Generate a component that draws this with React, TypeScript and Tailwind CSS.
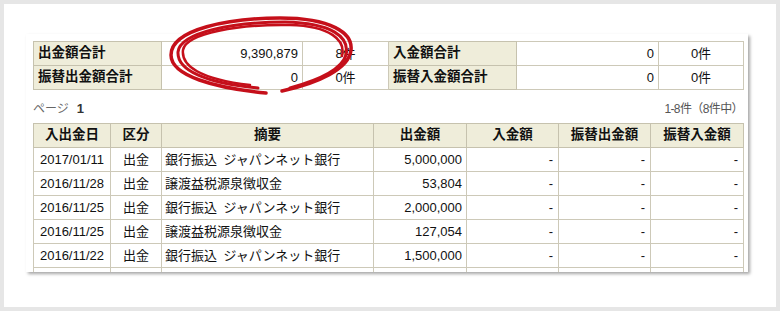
import React from "react";

const rows: [string, string, string, string][] = [
  ["2017/01/11", "出金", "銀行振込\u2002ジャパンネット銀行", "5,000,000"],
  ["2016/11/28", "出金", "譲渡益税源泉徴収金", "53,804"],
  ["2016/11/25", "出金", "銀行振込\u2002ジャパンネット銀行", "2,000,000"],
  ["2016/11/25", "出金", "譲渡益税源泉徴収金", "127,054"],
  ["2016/11/22", "出金", "銀行振込\u2002ジャパンネット銀行", "1,500,000"],
  ["2016/11/22", "出金", "譲渡益税源泉徴収金", "98,315"],
];

const th = "border border-[#c6c2ae] bg-[#efedda] font-bold text-[13.5px] text-[#111] h-[24px] p-0";
const td = "border border-[#cdc9b8] text-[13px] text-[#111] h-[24px] p-0";

export default function App() {
  return (
    <div className="relative w-[780px] h-[311px] border-4 border-[#e6e6e6] bg-white font-['Liberation_Sans','Noto_Sans_CJK_JP',sans-serif] overflow-hidden">
      <div className="ml-[22px] mt-[30px] w-[722px] h-[238px] bg-white shadow-[2px_2px_3px_rgba(0,0,0,0.35)] overflow-hidden">
        <div className="pl-[7px] pt-[7px]">
          <table className="border-collapse table-fixed w-[710px] border border-[#bdb8a3]">
            <colgroup>
              <col className="w-[128px]" />
              <col className="w-[141px]" />
              <col className="w-[86px]" />
              <col className="w-[128px]" />
              <col className="w-[142px]" />
              <col className="w-[85px]" />
            </colgroup>
            <tbody>
              <tr>
                <td className={`${th} text-left pl-[4px]`}>出金額合計</td>
                <td className={`${td} text-right pr-[4px]`}>9,390,879</td>
                <td className={`${td} text-center`}>8件</td>
                <td className={`${th} text-left pl-[4px]`}>入金額合計</td>
                <td className={`${td} text-right pr-[4px]`}>0</td>
                <td className={`${td} text-center`}>0件</td>
              </tr>
              <tr>
                <td className={`${th} text-left pl-[4px]`}>振替出金額合計</td>
                <td className={`${td} text-right pr-[4px]`}>0</td>
                <td className={`${td} text-center`}>0件</td>
                <td className={`${th} text-left pl-[4px]`}>振替入金額合計</td>
                <td className={`${td} text-right pr-[4px]`}>0</td>
                <td className={`${td} text-center`}>0件</td>
              </tr>
            </tbody>
          </table>

          <div className="w-[710px] flex justify-between items-center pt-[11px] pb-[6px] leading-[16px]">
            <div className="flex items-center">
              <span className="text-[12px] text-[#666]">ページ</span>
              <span className="ml-[8px] text-[13px] font-bold text-[#333]">1</span>
            </div>
            <span className="text-[12px] text-[#555] tracking-[-0.6px]">1-8件（8件中）</span>
          </div>

          <table className="border-collapse table-fixed w-[710px] border border-[#bdb8a3]">
            <colgroup>
              <col className="w-[77px]" />
              <col className="w-[51px]" />
              <col className="w-[212px]" />
              <col className="w-[93px]" />
              <col className="w-[92px]" />
              <col className="w-[92px]" />
              <col className="w-[93px]" />
            </colgroup>
            <thead>
              <tr>
                <th className={`${th} text-center`}>入出金日</th>
                <th className={`${th} text-center`}>区分</th>
                <th className={`${th} text-center`}>摘要</th>
                <th className={`${th} text-center`}>出金額</th>
                <th className={`${th} text-center`}>入金額</th>
                <th className={`${th} text-center`}>振替出金額</th>
                <th className={`${th} text-center`}>振替入金額</th>
              </tr>
            </thead>
            <tbody>
              {rows.map((r, i) => (
                <tr key={i}>
                  <td className={`${td} text-center`}>{r[0]}</td>
                  <td className={`${td} text-center`}>{r[1]}</td>
                  <td className={`${td} text-left pl-[3px]`}>{r[2]}</td>
                  <td className={`${td} text-right pr-[4px]`}>{r[3]}</td>
                  <td className={`${td} text-right pr-[5px]`}>-</td>
                  <td className={`${td} text-right pr-[5px]`}>-</td>
                  <td className={`${td} text-right pr-[5px]`}>-</td>
                </tr>
              ))}
            </tbody>
          </table>
        </div>
      </div>

      <svg
        className="absolute left-[-4px] top-[-4px] pointer-events-none"
        width="780"
        height="311"
        viewBox="0 0 780 311"
      >
        <g fill="none" stroke="#c50f1a" strokeLinecap="round" strokeLinejoin="round">
          <path strokeWidth="3.5" d="M 266 93 C 215 88, 171 76, 171 55 C 171 29, 230 18, 280 18 C 331 18, 353 33, 351 50 C 349 69, 318 83, 282 91" />
          <path strokeWidth="3" d="M 258 88 C 205 83, 177 70, 178 52 C 180 32, 235 22, 285 22 C 332 23, 350 37, 346 55 C 341 72, 312 82, 290 88" />
          <path strokeWidth="2.5" d="M 250 85 C 200 79, 181 66, 183 50 C 186 33, 240 24, 290 25 C 330 26, 346 40, 342 56" />
        </g>
      </svg>
    </div>
  );
}
